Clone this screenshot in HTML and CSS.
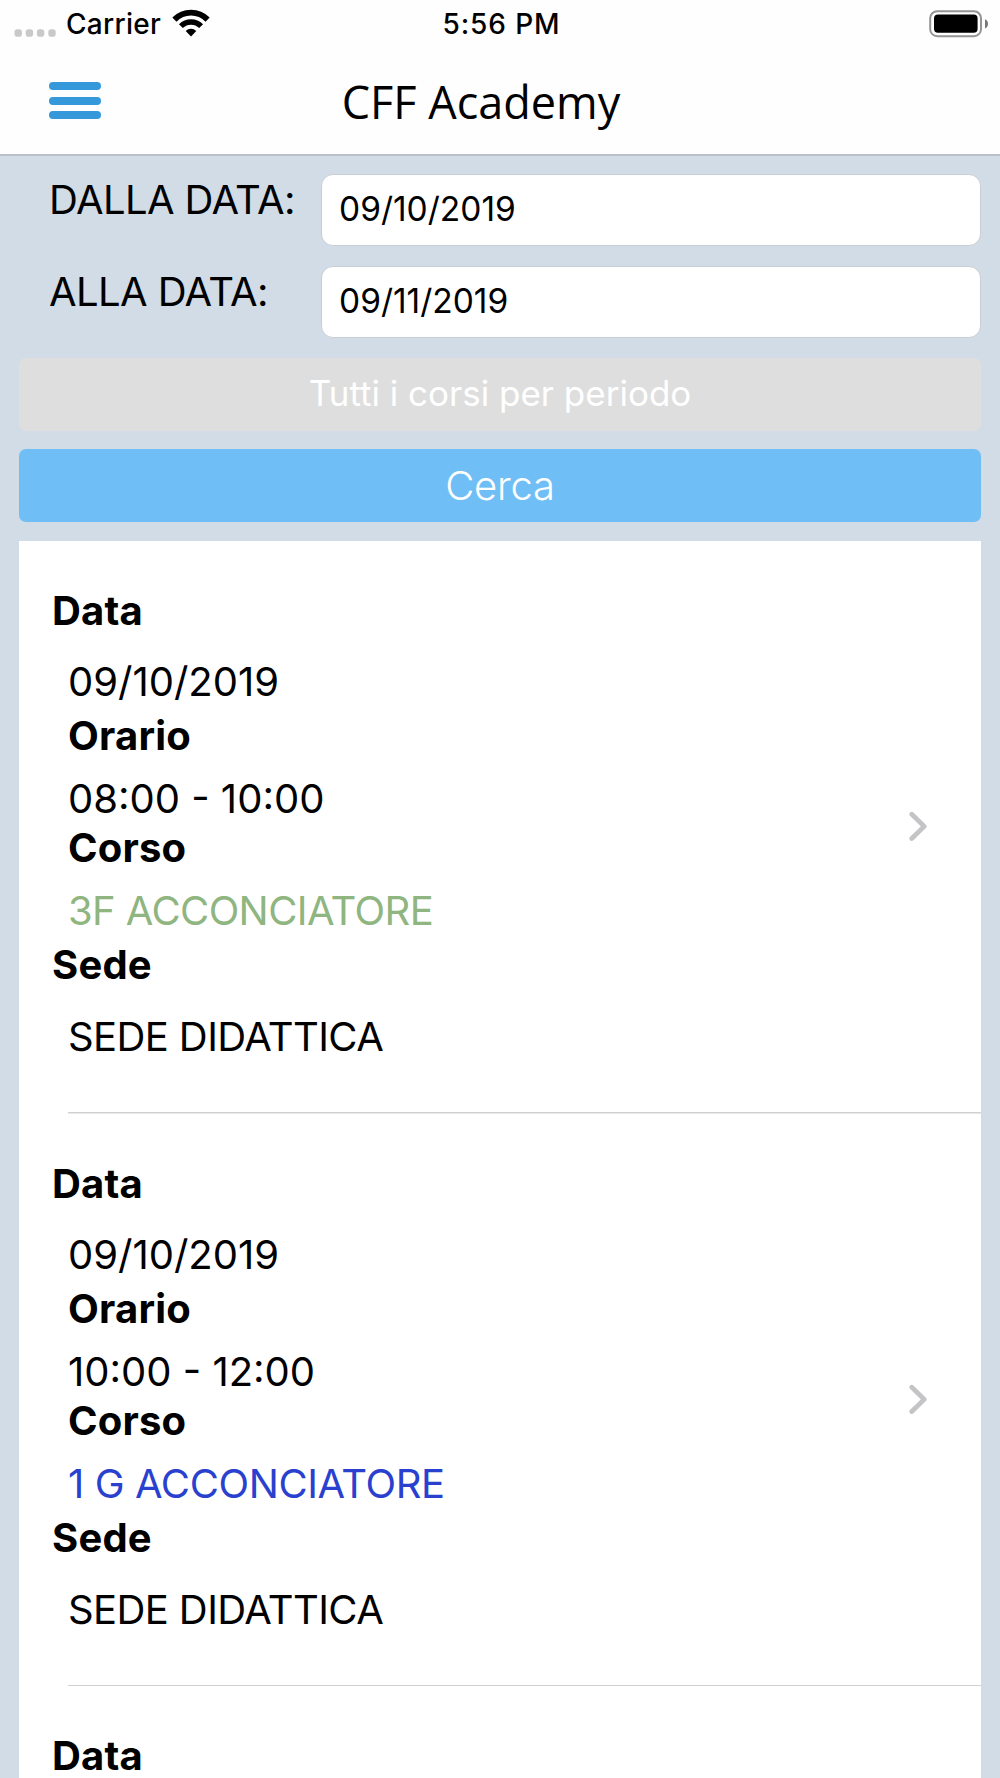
FILE: index.html
```
<!DOCTYPE html>
<html lang="it">
<head>
	<meta charset="utf-8">
	<title>CFF Academy</title>
	<link rel="stylesheet" href="styles.css">
</head>
<body>
	<header class="header">
		<div class="status-bar">
			<div class="carrier">
				<svg class="signal" width="44" height="8" viewBox="0 0 44 8" fill="#c9c9c9">
					<rect x="0.5" y="0.3" width="7.4" height="7.4" rx="2.8"/>
					<rect x="11.7" y="0.3" width="7.4" height="7.4" rx="2.8"/>
					<rect x="22.9" y="0.3" width="7.4" height="7.4" rx="2.8"/>
					<rect x="34.3" y="0.3" width="7.4" height="7.4" rx="2.8"/>
				</svg>
				<span>Carrier</span>
				<svg class="wifi" width="38" height="28" viewBox="0 0 38 28">
					<path d="M2.4 10.6a23.4 23.4 0 0 1 33.2 0" fill="none" stroke="#000" stroke-width="5.8"/>
					<path d="M8.9 17.2a14.2 14.2 0 0 1 20.2 0" fill="none" stroke="#000" stroke-width="5.4"/>
					<path d="M19 27.4l-5.3-5.4a7.6 7.6 0 0 1 10.6 0z"/>
				</svg>
			</div>
			<div class="time">5:56 PM</div>
			<svg class="battery" width="60" height="28" viewBox="0 0 60 28">
				<rect x="1.2" y="1.2" width="50.8" height="25" rx="7" fill="none" stroke="#949494" stroke-width="2"/>
				<rect x="5" y="4.4" width="43.6" height="18.4" rx="4"/>
				<path d="M56 9.3q3 1.2 3 4.5t-3 4.7z" fill="#777"/>
			</svg>
		</div>
		<div class="navbar">
			<button class="menu" aria-label="Menu"><i></i><i></i><i></i></button>
			<h1>CFF Academy</h1>
		</div>
	</header>

	<form class="search">
		<div class="field">
			<label for="dal">DALLA DATA:</label>
			<input type="text" id="dal" value="09/10/2019">
		</div>
		<div class="field">
			<label for="al">ALLA DATA:</label>
			<input type="text" id="al" value="09/11/2019">
		</div>
		<button type="button" class="btn all">Tutti i corsi per periodo</button>
		<button type="button" class="btn cerca">Cerca</button>
	</form>

	<div class="list">
		<div class="item">
			<dl>
				<dt class="data">Data</dt>
				<dd class="wide">09/10/2019</dd>
				<dt class="orario">Orario</dt>
				<dd>08:00 - 10:00</dd>
				<dt class="corso">Corso</dt>
				<dd class="caps green">3F ACCONCIATORE</dd>
				<dt class="sede">Sede</dt>
				<dd class="caps wide">SEDE DIDATTICA</dd>
			</dl>
			<svg class="chevron" width="20" height="32" viewBox="0 0 20 32"><path d="M2.8 3.3L15.2 15.4L2.8 27.5" fill="none" stroke="#c4c4c6" stroke-width="4.8" stroke-linecap="round" stroke-linejoin="round"/></svg>
		</div>
		<div class="item">
			<dl>
				<dt class="data">Data</dt>
				<dd class="wide">09/10/2019</dd>
				<dt class="orario">Orario</dt>
				<dd>10:00 - 12:00</dd>
				<dt class="corso">Corso</dt>
				<dd class="caps blue">1 G ACCONCIATORE</dd>
				<dt class="sede">Sede</dt>
				<dd class="caps wide">SEDE DIDATTICA</dd>
			</dl>
			<svg class="chevron" width="20" height="32" viewBox="0 0 20 32"><path d="M2.8 3.3L15.2 15.4L2.8 27.5" fill="none" stroke="#c4c4c6" stroke-width="4.8" stroke-linecap="round" stroke-linejoin="round"/></svg>
		</div>
		<div class="item">
			<dl>
				<dt class="data">Data</dt>
			</dl>
		</div>
	</div>
</body>
</html>
```
FILE: styles.css
```
* {
	box-sizing: border-box;
}

body {
	display: flex;
	flex-direction: column;
	margin: 0;
	height: 1778px;
	overflow: hidden;
	background-color: #d2dce6;
	font-family: Inter, sans-serif;
	font-size: 40px;
	line-height: 48px;
	color: #000;
}

.header {
	height: 156px;
	background-color: #fefefe;
	border-bottom: 2px solid #b9c0c9;
}

/* status bar */
.status-bar {
	display: grid;
	grid-template-columns: 1fr auto 1fr;
	height: 48px;
	padding: 0 11px 0 14px;
	font-size: 28px;
	font-weight: 500;
}

.carrier {
	display: flex;
	letter-spacing: 0.3px;
}

.signal {
	margin: 29px 8px 0 0;
}

.wifi {
	margin: 9px 0 0 11px;
}

.time {
	letter-spacing: 0.9px;
}

.battery {
	justify-self: end;
	margin-top: 10px;
}

/* navbar */
.navbar {
	display: grid;
	grid-template-columns: 1fr auto 1fr;
	height: 106px;
}

.menu {
	display: flex;
	flex-direction: column;
	gap: 6.5px;
	width: 52px;
	height: 37px;
	margin: 34px 0 0 49px;
	padding: 0;
	border: none;
	background: none;
}

.menu i {
	height: 8px;
	border-radius: 4px;
	background-color: #3498db;
}

h1 {
	margin: 24px 38px 0 0;
	font-family: "Open Sans", sans-serif;
	font-size: 45px;
	font-weight: 400;
	line-height: 60px;
}

/* search form */
.search {
	display: flex;
	flex-direction: column;
	padding: 18px 19px 0;
}

.field {
	display: flex;
	justify-content: space-between;
	height: 72px;
	margin-bottom: 20px;
}

.field label {
	padding: 2px 0 0 30px;
	letter-spacing: -0.6px;
}

.field input {
	width: 660px;
	height: 72px;
	padding: 0 17px 3px;
	border: 1px solid #c8ced4;
	border-radius: 12px;
	background-color: #fff;
	font-family: inherit;
	font-size: 33.5px;
}

.btn {
	height: 73px;
	padding: 0;
	border: none;
	border-radius: 7px;
	font-family: inherit;
	color: #fff;
}

.all {
	margin-bottom: 18px;
	padding-bottom: 3px;
	background-color: #dedede;
	font-size: 35px;
}

.cerca {
	background-color: #70bef6;
	font-size: 40px;
	font-weight: 300;
	letter-spacing: -0.2px;
}

/* results */
.list {
	flex: 1;
	margin: 19px 19px 0;
	background-color: #fff;
}

.item {
	display: flex;
	align-items: center;
	justify-content: space-between;
	height: 572.5px;
	padding-right: 52px;
	background: linear-gradient(#d0d1d3, #d0d1d3) 49px 100% / 100% 1.5px no-repeat;
}

.item:last-child {
	height: auto;
	background: none;
}

dl {
	align-self: flex-start;
	margin: 46px 0 0 49px;
}

dt {
	font-weight: 700;
	letter-spacing: 0.2px;
}

dd {
	margin: 15px 0 0;
}

.wide {
	margin-top: 23px;
}

.data, .sede {
	margin-left: -16px;
}

.orario, .sede {
	margin-top: 6px;
}

.sede + .wide {
	margin-top: 24px;
}

.corso {
	margin-top: 1px;
}

.caps {
	letter-spacing: -0.6px;
}

.green {
	color: #8fb580;
}

.blue {
	color: #2a41cf;
	letter-spacing: -0.4px;
}
```
